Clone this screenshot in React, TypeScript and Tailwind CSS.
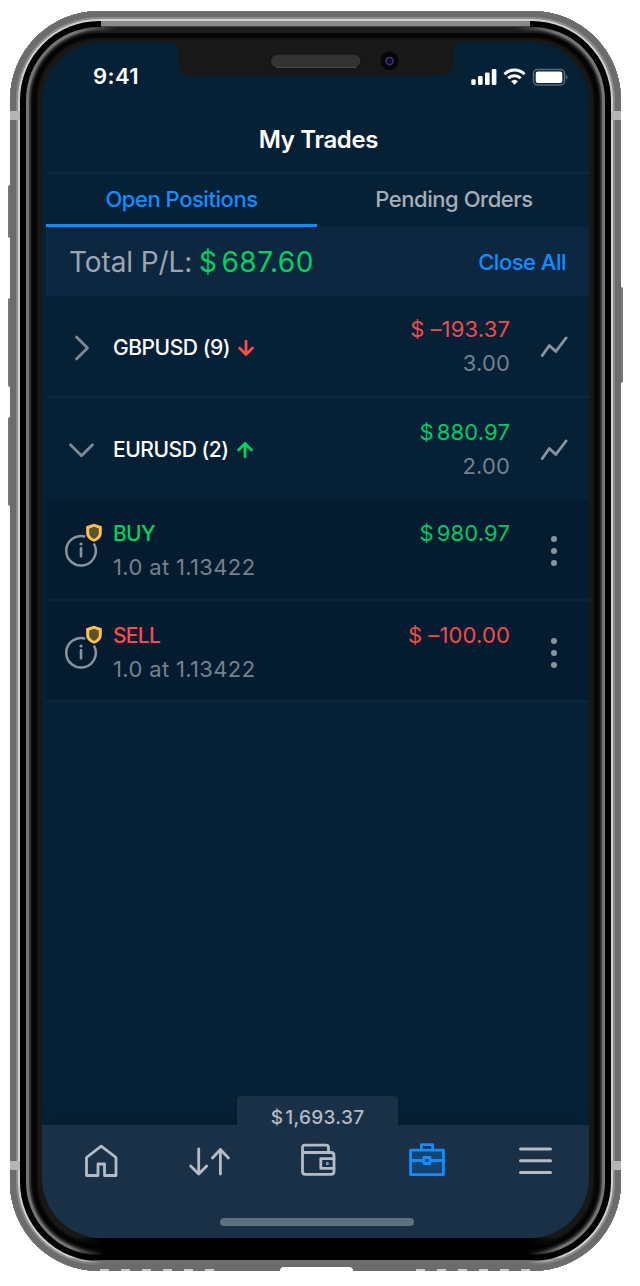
import React from "react";

const groups = [
  { name: "GBPUSD", count: 9, up: false, open: false, pl: "–193.37", lots: "3.00" },
  { name: "EURUSD", count: 2, up: true, open: true, pl: "880.97", lots: "2.00" },
];

const positions = [
  { side: "BUY", detail: "1.0 at 1.13422", pl: "980.97" },
  { side: "SELL", detail: "1.0 at 1.13422", pl: "–100.00" },
];

const StatusIcons: React.FC = () => (
  <svg width="98" height="20" viewBox="0 0 98 20" fill="none">
    {/* señal */}
    <g fill="#fff">
      <rect x="0.3" y="12.2" width="4.4" height="5.8" rx="1.2" />
      <rect x="7" y="9" width="4.6" height="9" rx="1.2" />
      <rect x="14" y="5.6" width="4.6" height="12.4" rx="1.2" />
      <rect x="20.8" y="2" width="4.6" height="16" rx="1.2" />
    </g>
    {/* wifi */}
    <g stroke="#fff" strokeWidth="3">
      <path d="M33.5 7.2a14 14 0 0 1 20 0" />
      <path d="M37.3 11.2a8.8 8.8 0 0 1 12.4 0" />
    </g>
    <path d="M43.5 17.8l-3.4-3.5a5 5 0 0 1 6.8 0z" fill="#fff" />
    {/* batería */}
    <rect x="62.5" y="2.5" width="31" height="15.5" rx="4" stroke="#5b6b7c" strokeWidth="1.5" />
    <rect x="64.7" y="4.5" width="26.6" height="11.5" rx="2" fill="#fff" />
    <path d="M95 7.8v5a3 3 0 0 0 0-5z" fill="#5b6b7c" />
  </svg>
);

const Notch: React.FC = () => (
  <svg className="absolute left-[128px] top-0" width="292" height="34" viewBox="0 0 292 34">
    <path d="M0 -1H292V0.5Q284 0.5 284 8V19Q284 33.5 269 33.5H22.5Q8 33.5 8 19V8Q8 0.5 0 0.5Z" fill="#181818" />
    <rect x="100.5" y="12" width="90.5" height="14" rx="7" fill="#333" stroke="#101010" />
    <path d="M106 25.5H186" stroke="#4c4c4c" />
    <circle cx="219.5" cy="19" r="9.2" fill="#060606" />
    <circle cx="219.5" cy="19" r="3.6" fill="#120e24" stroke="#43308a" strokeWidth="1.5" />
  </svg>
);

const Chevron: React.FC<{ open: boolean }> = ({ open }) => (
  <svg width="26" height="26" viewBox="0 0 26 26" fill="none" stroke="#7e8995" strokeWidth="2.8" strokeLinecap="round" strokeLinejoin="round">
    {open ? <path d="M1.5 7.8L12.5 18.8L23.5 7.8" /> : <path d="M7.5 2L18.5 13L7.5 24" />}
  </svg>
);

const TrendArrow: React.FC<{ up: boolean }> = ({ up }) => (
  <svg width="18" height="18" viewBox="0 0 18 18" fill="none" stroke={up ? "#00d15f" : "#fb4b4b"} strokeWidth="2.8" strokeLinecap="round" strokeLinejoin="round">
    {up ? <path d="M9 15.8V2.5M2.5 9L9 2.5L15.5 9" /> : <path d="M9 2.2V15.5M2.5 9L9 15.5L15.5 9" />}
  </svg>
);

const ChartIcon: React.FC = () => (
  <svg width="28" height="22" viewBox="0 0 28 22" fill="none" stroke="#8a949f" strokeWidth="2.9" strokeLinecap="round" strokeLinejoin="round">
    <path d="M2.3 19.5L9.3 9.5L15.8 15.5L26 2" />
  </svg>
);

const InfoShield: React.FC = () => (
  <svg width="40" height="46" viewBox="0 0 40 46" fill="none">
    <path d="M21.3 14.6A14.8 14.8 0 1 0 29.9 21.5" stroke="#8a949f" strokeWidth="2.5" />
    <rect x="15.7" y="25" width="2.6" height="10.5" rx="1" fill="#8a949f" />
    <circle cx="17" cy="22" r="1.6" fill="#8a949f" />
    <path d="M30 1.8L37.8 4.2V11Q37.8 17 30 19.8Q22.2 17 22.2 11V4.2Z" fill="#ffc24a" />
    <path d="M30 4.8L34.8 6.4V11Q34.8 14.6 30 17Q25.2 14.6 25.2 11V6.4Z" fill="#5c522f" />
  </svg>
);

const Money: React.FC<{ value: string }> = ({ value }) => {
  const negative = value.startsWith("–");
  return (
    <span className={negative ? "text-[#f14b4d]" : "text-[#00c963]"}>
      $<span className={negative ? "ml-[6px]" : "ml-[3px]"}>{value}</span>
    </span>
  );
};

const GroupRow: React.FC<{ group: (typeof groups)[number] }> = ({ group }) => (
  <div className={`flex items-center ${group.open ? "h-[101px]" : "h-[102px] border-b-2 border-[#0c273f]"}`}>
    <div className="flex w-[67px] justify-center pl-1 pt-[3px]">
      <Chevron open={group.open} />
    </div>
    <div className="flex flex-1 items-center gap-[7px] pt-[3px] text-[21px] font-medium tracking-[-0.45px] text-white">
      <span>{group.name} ({group.count})</span>
      <TrendArrow up={group.up} />
    </div>
    <div className="-mr-px text-right text-[22px] leading-[34px] tracking-[0.15px]">
      <div><Money value={group.pl} /></div>
      <div className="text-[#74818e]">{group.lots}</div>
    </div>
    <div className="flex w-[80px] justify-center pl-[10px] pt-[2px]">
      <ChartIcon />
    </div>
  </div>
);

const PositionRow: React.FC<{ position: (typeof positions)[number] }> = ({ position }) => (
  <div className="flex h-[101.5px] border-b-2 border-[#0d2339] bg-[#051c30] pt-[17px]">
    <div className="w-[67px] pl-[18px] pt-[6px]">
      <InfoShield />
    </div>
    <div className="flex-1">
      <div className={`text-[21px] leading-[35px] font-medium tracking-[-0.7px] ${position.side === "BUY" ? "text-[#00d15f]" : "text-[#fb4b4b]"}`}>{position.side}</div>
      <div className="text-[22px] leading-[32px] tracking-[0.35px] text-[#74818e]">{position.detail}</div>
    </div>
    <div className="-mr-px text-[22px] leading-[34px] tracking-[0.15px]">
      <Money value={position.pl} />
    </div>
    <div className="flex w-[80px] flex-col items-center gap-[6px] pl-[9px] pt-[20px]">
      <span className="size-[6px] rounded-full bg-[#8a949f]" />
      <span className="size-[6px] rounded-full bg-[#8a949f]" />
      <span className="size-[6px] rounded-full bg-[#8a949f]" />
    </div>
  </div>
);

const icons = [
  <path d="M5.5 16.5L20.2 5.2L35 16.5V34.5H23.5V23H17V34.5H5.5Z" />,
  <path d="M8.7 8V33M0.7 25L8.7 33L16.7 25M30.4 33V8.5M22.4 17L30.4 8.5L38.4 17" />,
  <>
    <path d="M30.5 11V6.5Q30.5 4.2 28 4.2H7Q4.5 4.2 4.5 6.7V30.5Q4.5 33.3 7.5 33.3H33Q36 33.3 36 30.5V14.5Q36 11.5 33 11.5H4.5" />
    <path d="M36 17.6H22.8V27.4H36" />
    <circle cx="29.3" cy="22.6" r="0.5" strokeWidth="2" />
  </>,
  <>
    <path d="M4.6 9.2H37.4V33.6H4.6Z" fill="#14436f" />
    <path d="M15.4 9V3.6H26.6V9M4.6 19.5H17.9M23.900 19.5H37.4M17.900 16.5H23.900V22.5H17.900Z" />
  </>,
  <path d="M5.5 8H35.5M5.5 19.7H35.5M5.5 31.5H35.5" strokeWidth="3" />,
];

const BottomNav: React.FC = () => (
  <div className="relative h-[113px] bg-[#1a3046] shadow-[0_0_20px_rgba(0,0,0,0.25)]">
    <div className="absolute -top-[29px] left-[195px] flex h-[42px] w-[161px] justify-center rounded-t-[4px] bg-[#1a3046] pt-[8px] text-[19px] leading-[28px] font-medium tracking-[0.3px] text-[#b3bcc6]">
      <span>$<span className="ml-[2px]">1,693.37</span></span>
    </div>
    <div className="relative flex pl-[5px] pt-4 text-[#b3bcc6]">
      {icons.map((icon, i) => (
        <div key={i} className={`flex flex-1 justify-center ${i === 3 ? "text-[#128cff]" : ""}`}>
          <svg className="overflow-visible" width="40" height="40" viewBox="0 0 40 40" fill="none" stroke="currentColor" strokeWidth="2.8" strokeLinecap="round" strokeLinejoin="round">
            {icon}
          </svg>
        </div>
      ))}
    </div>
    <div className="ml-[178px] mt-[37px] h-[8px] w-[194px] rounded-full bg-[#5f7080]" />
  </div>
);

const App: React.FC = () => {
  return (
    <div className="relative h-[1286px] w-[640px] overflow-hidden bg-white pl-[10px] pt-[11px] font-['Inter',sans-serif]">
      {/* botones laterales */}
      <div className="absolute left-[8px] top-[185px] h-[53px] w-[5px] rounded-l-[2px] bg-[#777]" />
      <div className="absolute left-[8px] top-[298px] h-[89px] w-[5px] rounded-l-[2px] bg-[#777]" />
      <div className="absolute left-[8px] top-[417px] h-[89px] w-[5px] rounded-l-[2px] bg-[#777]" />
      <div className="absolute left-[618px] top-[287px] h-[96px] w-[5px] rounded-r-[2px] bg-[#777]" />

      <div className="relative h-[1260px] w-[611px] overflow-hidden rounded-[89px] bg-[#181818] px-[32px] pt-[31px] pb-[33px] shadow-[inset_0_0_0_6px_#6c6c6c,inset_0_0_0_8px_#8c8c8c,inset_0_0_0_10px_#d0d0d0,inset_0_0_0_16px_#000,inset_0_0_1px_19px_#777,inset_0_0_2px_21px_#3a3a3a,inset_0_0_2px_27px_#050505]">
        {/* antenas */}
        <div className="absolute left-0 top-[100px] h-[9px] w-[10px] bg-[#b5b5b5]" />
        <div className="absolute right-0 top-[100px] h-[9px] w-[10px] bg-[#b5b5b5]" />
        <div className="absolute left-0 top-[1150px] h-[9px] w-[10px] bg-[#b5b5b5]" />
        <div className="absolute right-0 top-[1150px] h-[9px] w-[10px] bg-[#b5b5b5]" />
        {/* bordes superior e inferior */}
        <div className="absolute left-[66px] top-[16px] h-[6px] w-[479px] bg-[linear-gradient(90deg,transparent,#1c1c1c_40px,#1c1c1c_439px,transparent)]" />
        <div className="absolute left-[91px] top-[10px] h-[6px] w-[429px] border-b border-[#444] bg-[#888]" />
        <div className="absolute bottom-[11px] left-[60px] h-[22px] w-[491px] bg-[linear-gradient(90deg,transparent,#000_34px,#000_457px,transparent)]" />
        <div className="absolute bottom-0 left-[64px] h-[11px] w-[483px] bg-[linear-gradient(90deg,transparent,#6c6c6c_30px,#6c6c6c_453px,transparent)]" />
        <div className="absolute bottom-0 left-[90px] h-[2px] w-[115px] bg-[repeating-linear-gradient(90deg,#ccc_0_9px,#6c6c6c_9px_21px)]" />
        <div className="absolute bottom-0 left-[406px] h-[2px] w-[115px] bg-[repeating-linear-gradient(90deg,#ccc_0_9px,#6c6c6c_9px_21px)]" />

        <div className="relative flex h-[1196px] w-[547px] flex-col overflow-hidden rounded-[60px] bg-[#062136]">
          <Notch />
          <div className="flex h-[66px] items-center justify-between pl-[51px] pr-[20px] pt-[3px] text-[22px] font-semibold tracking-[0.4px] text-white">
            <span>9:41</span>
            <StatusIcons />
          </div>
          <div className="ml-1 flex h-[66px] items-center justify-center border-b-2 border-[#0c273f] pl-[2px] text-[24px] font-semibold tracking-[-0.35px] text-white">
            My Trades
          </div>
          <div className="ml-1 flex h-[53px] text-center text-[22px] leading-[50px] font-medium tracking-[-0.45px]">
            <div className="w-[271px] border-b-3 border-[#128cff] text-[#128cff]">Open Positions</div>
            <div className="w-[272px] pl-[2px] text-[#a4afb9]">Pending Orders</div>
          </div>
          <div className="ml-1 flex h-[69px] items-center justify-between bg-[#0d2740] pl-[23px] pr-[23px]">
            <div className="text-[28px] tracking-[-0.1px] text-[#9ba6b1]">
              Total P/L: <span className="-ml-px tracking-[0.5px] text-[#00d15f]">$<span className="ml-[4px]">687.60</span></span>
            </div>
            <div className="pt-px text-[22px] font-medium tracking-[-0.5px] text-[#128cff]">Close All</div>
          </div>
          <div className="ml-1 flex-1">
            {groups.map(group => (
              <GroupRow key={group.name} group={group} />
            ))}
            {positions.map(position => (
              <PositionRow key={position.side} position={position} />
            ))}
          </div>
          <BottomNav />
        </div>
      </div>
      {/* conector inferior */}
      <div className="absolute left-[280px] top-[1267px] h-[5px] w-[73px] rounded-t-[4px] bg-white" />
    </div>
  );
};

export default App;
